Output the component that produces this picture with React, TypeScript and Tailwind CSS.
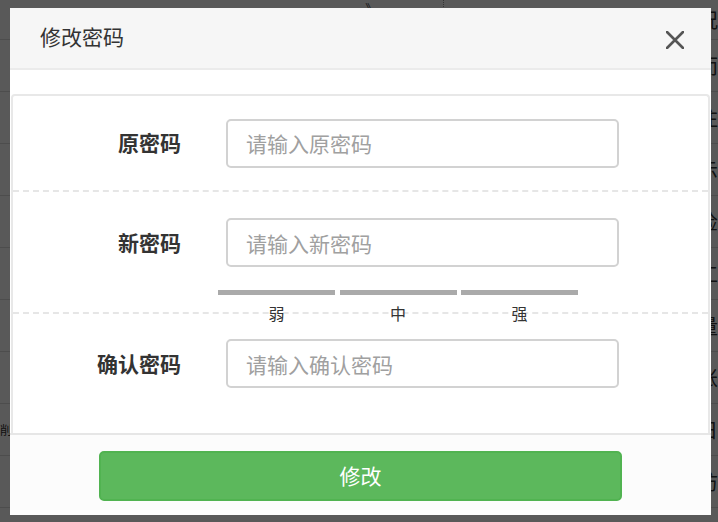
import { useState } from "react";

const cjk = "font-['Noto_Sans_CJK_SC','Noto_Sans',sans-serif]";

// rows of the page that sits behind the dimmed overlay
const pageRows = [
  { left: "", mid: "》", right: "立即查看况" },
  { left: "", mid: "", right: "而" },
  { left: "", mid: "", right: "注" },
  { left: "", mid: "", right: "示" },
  { left: "", mid: "", right: "检" },
  { left: "", mid: "", right: "工" },
  { left: "", mid: "", right: "量" },
  { left: "", mid: "", right: "账" },
  { left: "削", mid: "", right: "日" },
  { left: "", mid: "", right: "访" },
];

function PasswordInput({ placeholder }: { placeholder: string }) {
  const [value, setValue] = useState("");
  return (
    <input
      type="password"
      value={value}
      onChange={(e) => setValue(e.target.value)}
      placeholder={placeholder}
      className="w-[393px] h-[49px] px-[18px] border-2 border-[#d2d2d2] rounded-[5px] bg-white text-[21px] text-[#333] placeholder:text-[#a0a0a0] outline-none"
    />
  );
}

export default function App() {
  return (
    <div className={`relative w-[718px] h-[522px] overflow-hidden bg-white ${cjk}`}>
      {/* Background page */}
      <div className="flex flex-col text-[20px] text-[#333]">
        {pageRows.map((row, i) => (
          <div
            key={i}
            className={`flex items-center border-b border-[#ddd] ${i === 0 ? "h-[40px]" : "h-[52px]"}`}
          >
            <div className="w-[420px] text-[12px]">{row.left}</div>
            <div className="w-[89px] text-[12px] self-start">{row.mid}</div>
            <div className="w-[199px] border-l border-dotted border-[#999] h-full"></div>
            <div className="pl-[2px] whitespace-nowrap">{row.right}</div>
          </div>
        ))}
      </div>

      {/* Overlay */}
      <div className="absolute inset-0 bg-black/65"></div>

      {/* Modal */}
      <div className="absolute left-[10px] top-[8px] w-[701px] h-[507px] flex flex-col bg-white">
        {/* Header */}
        <div className="h-[62px] flex items-center justify-between pl-[30px] pr-[27px] bg-[#f6f6f6] border-b-2 border-[#ebebeb]">
          <span className="text-[21px] text-[#333] -mt-[2px]">修改密码</span>
          <button className="w-[18px] h-[18px] flex items-center justify-center mt-[3px]">
            <svg width="18" height="18" viewBox="0 0 18 18">
              <path
                d="M1 1L17 17M17 1L1 17"
                stroke="#555"
                strokeWidth="2.6"
                strokeLinecap="round"
              />
            </svg>
          </button>
        </div>

        {/* Body */}
        <div className="flex-1 pt-[24px] px-[1px]">
          <div className="h-full border-t-2 border-x-2 border-[#e8e8e8] rounded-t-[4px] bg-white">
            {/* Old password */}
            <div className="h-[96px] flex items-center border-b-2 border-dashed border-[#e6e6e6]">
              <label className="w-[168px] text-right text-[21px] font-bold text-[#333]">原密码</label>
              <div className="ml-[45px]">
                <PasswordInput placeholder="请输入原密码" />
              </div>
            </div>

            {/* New password */}
            <div className="h-[122px] pt-[26px] border-b-2 border-dashed border-[#e6e6e6]">
              <div className="flex items-center">
                <label className="w-[168px] text-right text-[21px] font-bold text-[#333]">新密码</label>
                <div className="ml-[45px]">
                  <PasswordInput placeholder="请输入新密码" />
                </div>
              </div>
              <div className="ml-[205px] w-[360px] mt-[23px]">
                <div className="flex gap-[4.5px]">
                  <div className="flex-1 h-[5px] bg-[#aaa]"></div>
                  <div className="flex-1 h-[5px] bg-[#aaa]"></div>
                  <div className="flex-1 h-[5px] bg-[#aaa]"></div>
                </div>
                <div className="flex gap-[4.5px] mt-[6px] text-[16px] leading-[24px] text-[#333]">
                  <span className="flex-1 text-center">弱</span>
                  <span className="flex-1 text-center">中</span>
                  <span className="flex-1 text-center">强</span>
                </div>
              </div>
            </div>

            {/* Confirm password */}
            <div className="pt-[25px] flex items-center">
              <label className="w-[168px] text-right text-[21px] font-bold text-[#333]">确认密码</label>
              <div className="ml-[45px]">
                <PasswordInput placeholder="请输入确认密码" />
              </div>
            </div>
          </div>
        </div>

        {/* Footer */}
        <div className="h-[82px] pt-[16px] border-t-2 border-[#e6e6e6] bg-[#fcfcfc] flex justify-center">
          <button className="w-[523px] h-[50px] rounded-[5px] bg-[#5cb85c] border-2 border-[#51b351] text-white text-[21px]">
            修改
          </button>
        </div>
      </div>
    </div>
  );
}
